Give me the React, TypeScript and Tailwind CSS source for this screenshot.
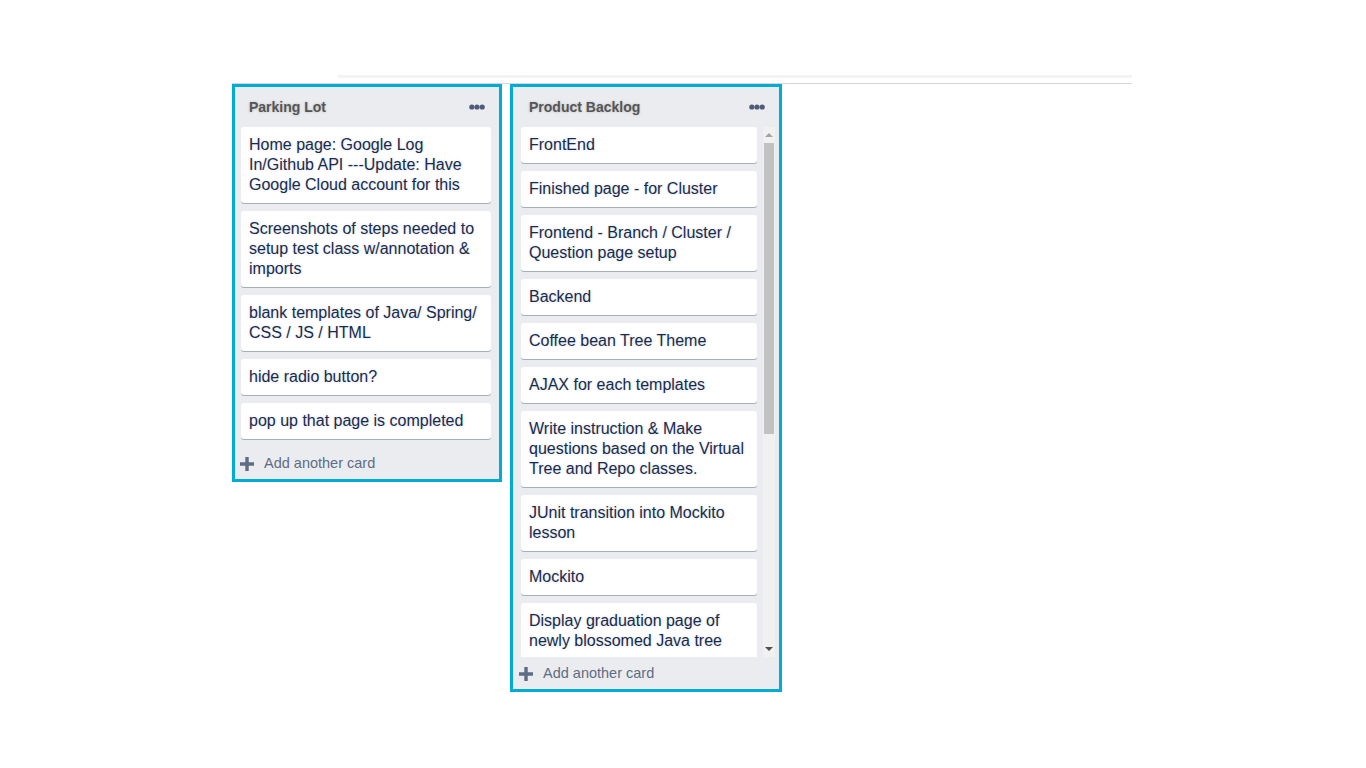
import React from 'react';

interface ListData {
  title: string;
  cards: string[];
  scroll?: boolean;
}

const lists: ListData[] = [
  {
    title: 'Parking Lot',
    cards: [
      'Home page: Google Log In/Github API ---Update: Have Google Cloud account for this',
      'Screenshots of steps needed to setup test class w/annotation & imports',
      'blank templates of Java/ Spring/ CSS / JS / HTML',
      'hide radio button?',
      'pop up that page is completed',
    ],
  },
  {
    title: 'Product Backlog',
    scroll: true,
    cards: [
      'FrontEnd',
      'Finished page - for Cluster',
      'Frontend - Branch / Cluster / Question page setup',
      'Backend',
      'Coffee bean Tree Theme',
      'AJAX for each templates',
      'Write instruction & Make questions based on the Virtual Tree and Repo classes.',
      'JUnit transition into Mockito lesson',
      'Mockito',
      'Display graduation page of newly blossomed Java tree',
    ],
  },
];

function Dots() {
  return (
    <svg width="16" height="6" viewBox="0 0 16 6" className="text-[#4f5b78]">
      <circle cx="2.8" cy="3" r="2.6" fill="currentColor" />
      <circle cx="8" cy="3" r="2.6" fill="currentColor" />
      <circle cx="13.2" cy="3" r="2.6" fill="currentColor" />
    </svg>
  );
}

function Plus() {
  return (
    <svg width="14" height="14" viewBox="0 0 14 14" className="text-[#5e6c84]">
      <path d="M7 0v14M0 7h14" stroke="currentColor" strokeWidth="3.4" />
    </svg>
  );
}

function Card({ text }: { text: string }) {
  return (
    <div className="bg-white rounded-[3px] shadow-[0_1px_0_rgba(9,30,66,0.3)] px-2 py-2 text-base leading-5 text-[#172b4d] [text-shadow:0_0_3px_rgba(23,43,77,0.18)] shrink-0">
      {text}
    </div>
  );
}

function List({ list }: { list: ListData }) {
  return (
    <div className={`${list.scroll ? 'w-[272px]' : 'w-[270px]'} border-[3px] border-[#00acd2] bg-[#ebecf0] flex flex-col`}>
      {/* Header */}
      <div className={`h-10 flex items-center justify-between pr-[14px] ${list.scroll ? 'pl-4' : 'pl-[14px]'}`}>
        <span className="text-sm font-bold text-[#555555] [text-shadow:0_0_3px_rgba(0,0,0,0.2)]">
          {list.title}
        </span>
        <Dots />
      </div>

      {list.scroll ? (
        <div className="flex h-[530px] pl-2 pr-1">
          <div className="w-[236px] flex flex-col gap-2 overflow-hidden">
            {list.cards.map((c, i) => (
              <Card key={i} text={c} />
            ))}
          </div>
          {/* Scrollbar */}
          <div className="ml-[6px] w-3 bg-[#f1f1f1] flex flex-col items-center">
            <div className="h-4 flex items-center justify-center">
              <div className="w-0 h-0 border-x-[4px] border-x-transparent border-b-[4px] border-b-[#a3a3a3]" />
            </div>
            <div className="w-[10px] h-[291px] bg-[#c1c1c1]" />
            <div className="flex-1" />
            <div className="h-4 flex items-center justify-center">
              <div className="w-0 h-0 border-x-[4px] border-x-transparent border-t-[4px] border-t-[#505050]" />
            </div>
          </div>
        </div>
      ) : (
        <div className="flex flex-col gap-2 pl-[6px] pr-[8px] pb-2">
          {list.cards.map((c, i) => (
            <Card key={i} text={c} />
          ))}
        </div>
      )}

      {/* Add card */}
      <div className={`h-8 pt-[2px] flex items-center gap-[10px] ${list.scroll ? 'pl-[6px]' : 'pl-[5px]'}`}>
        <Plus />
        <span className="text-[14.5px] text-[#5e6c84]">Add another card</span>
      </div>
    </div>
  );
}

export default function App() {
  return (
    <div
      className="w-[1366px] h-[768px] bg-white overflow-hidden pt-[75px]"
      style={{ fontFamily: '"Liberation Sans", Arial, sans-serif' }}
    >
      <div className="ml-[338px] w-[794px] h-[3px] bg-[#f3f3f3]" />
      <div className="ml-[232px] mt-[5px] w-[900px] h-px bg-[#d9d6df]" />
      <div className="ml-[232px] flex items-start gap-2">
        {lists.map((l, i) => (
          <List key={i} list={l} />
        ))}
      </div>
    </div>
  );
}
